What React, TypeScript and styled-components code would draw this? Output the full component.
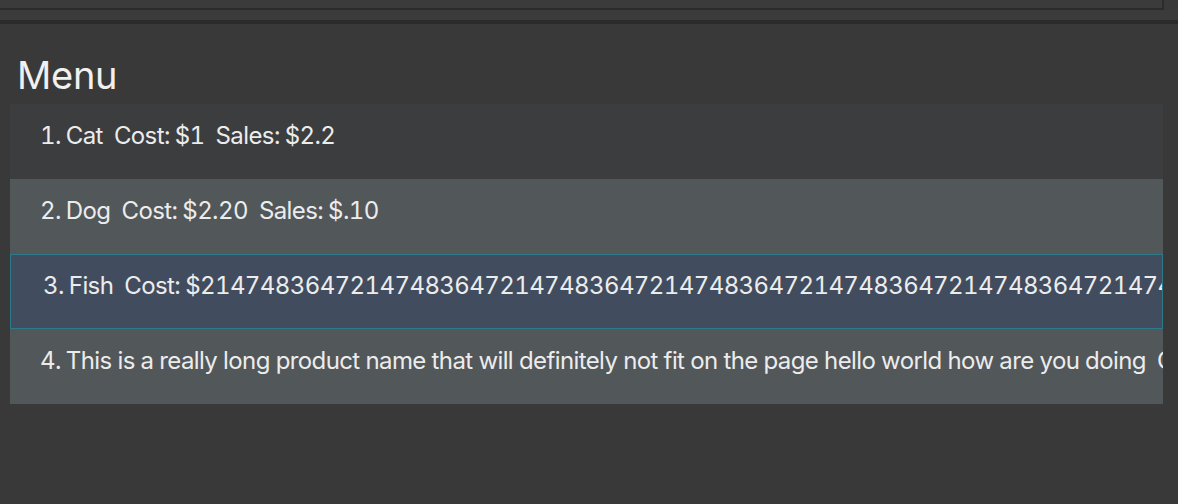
import React from "react";
import styled, { createGlobalStyle } from "styled-components";

const Global = createGlobalStyle`
  html, body { margin: 0; padding: 0; background: #393939; }
  body { font-family: Inter, "Noto Sans", sans-serif; color: #ececec; }
  #root { width: 1178px; height: 504px; overflow: hidden; }
`;

const Page = styled.div`
  width: 1178px;
  height: 504px;
  background: #393939;
  display: flex;
  flex-direction: column;
`;

const TopPanel = styled.div`
  height: 8px;
  margin-right: 14px;
  border-right: 2px solid #2b2b2b;
  border-bottom: 2px solid #2b2b2b;
  background: #3b3b3b;
`;

const TopGap = styled.div`
  height: 10px;
  background: #3b3b3b;
  border-bottom: 4px solid #2b2b2b;
`;

const Section = styled.div`
  display: flex;
  flex-direction: column;
  padding: 0 15px 0 10px;
`;

const Title = styled.h1`
  margin: 0;
  padding: 29px 0 6px 7px;
  font-size: 38px;
  line-height: 45px;
  font-weight: 400;
  letter-spacing: -0.3px;
  color: #f0f0f0;
`;

const List = styled.div`
  display: flex;
  flex-direction: column;
  overflow: hidden;
`;

const Row = styled.div<{ $tone: "dark" | "light" | "selected" }>`
  height: 75px;
  box-sizing: border-box;
  display: flex;
  align-items: center;
  gap: 11px;
  white-space: nowrap;
  overflow: hidden;
  font-size: 24px;
  letter-spacing: -0.6px;
  font-variant-numeric: tabular-nums;
  padding: 0 0 12px ${(p) => (p.$tone === "selected" ? "32px" : "30px")};
  background: ${(p) =>
    p.$tone === "dark" ? "#3c3d3f" : p.$tone === "light" ? "#52575a" : "#414c5e"};
  border: ${(p) => (p.$tone === "selected" ? "1px solid #2e7a8a" : "none")};
`;

const Pair = styled.span`
  display: inline-flex;
  gap: 5px;
  flex-shrink: 0;
`;

const big = "2147483647".repeat(9);

const items = [
  { n: "1.", name: "Cat", cost: "$1", sales: "$2.2", tone: "dark" as const },
  { n: "2.", name: "Dog", cost: "$2.20", sales: "$.10", tone: "light" as const },
  { n: "3.", name: "Fish", cost: "$" + big, sales: "$1", tone: "selected" as const },
  {
    n: "4.",
    name: "This is a really long product name that will definitely not fit on the page hello world how are you doing",
    cost: "$1",
    sales: "$1",
    tone: "light" as const,
  },
];

export default function App() {
  return (
    <Page>
      <Global />
      <TopPanel />
      <TopGap />
      <Section>
        <Title>Menu</Title>
        <List>
          {items.map((it) => (
            <Row key={it.n} $tone={it.tone}>
              <Pair>
                <span>{it.n}</span>
                <span>{it.name}</span>
              </Pair>
              <Pair>
                <span>Cost:</span>
                <span>{it.cost}</span>
              </Pair>
              <Pair>
                <span>Sales:</span>
                <span>{it.sales}</span>
              </Pair>
            </Row>
          ))}
        </List>
      </Section>
    </Page>
  );
}
